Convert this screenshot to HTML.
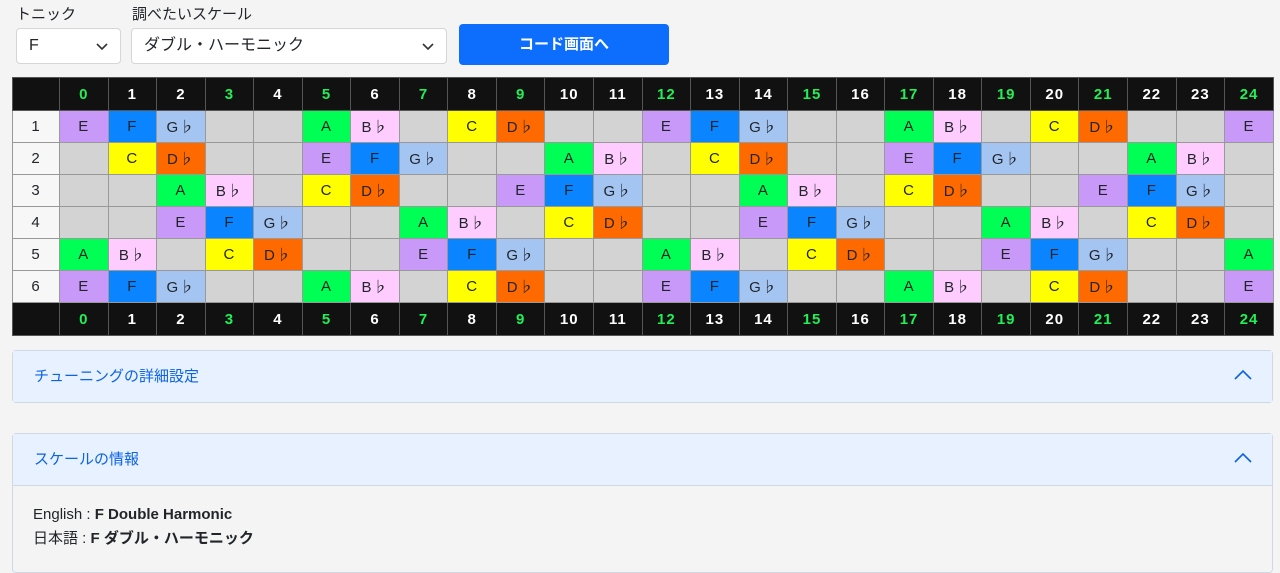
<!DOCTYPE html>
<html><head><meta charset="utf-8"><style>
body{margin:0;background:#f4f4f4;font-family:"Liberation Sans","Noto Sans CJK JP",sans-serif;color:#212529;width:1280px;height:553px;overflow:hidden;position:relative}
.lbl{position:absolute;top:3px;font-size:15px}
.sel{position:absolute;top:28px;height:36px;box-sizing:border-box;background:#fff;border:1px solid #d6d6d6;border-radius:4px;font-size:16px;line-height:34px;padding-left:12px}
.sel svg{position:absolute;right:12px;top:14px}
.btn{position:absolute;left:459px;top:24px;width:210px;height:41px;background:#0d6efd;border-radius:4px;color:#fff;font-size:15px;text-align:center;line-height:41px;font-weight:bold}
table{position:absolute;left:12px;top:77px;border-collapse:collapse;table-layout:fixed;width:1262px}
td{border:1px solid #999;height:31px;padding:0;text-align:center;font-size:15px;background:#d3d3d3;letter-spacing:1px}
tr.h td{background:#111;color:#fff;font-weight:bold;height:32px;border-color:#555}
tr.h td.g{color:#22ee55}
td.n{background:#f7f7f7;width:46px}
tr.h td.n{background:#111}
.e{background:#c999f9}.f{background:#0a84ff}.g{background:#a4c4f2}.a{background:#00ff55}.b{background:#ffccff}.c{background:#ffff00}.d{background:#ff6a00}
.acc{position:absolute;left:12px;width:1261px;border:1px solid #cfd9e6;border-radius:4px;box-sizing:border-box}
.acc .hd{background:#e7f1ff;height:51px;line-height:51px;padding-left:21px;color:#0c63e4;font-size:15px;position:relative}
.acc .hd svg{position:absolute;right:20px;top:19px}
</style></head><body>
<div class="lbl" style="left:16px">トニック</div>
<div class="lbl" style="left:132px">調べたいスケール</div>
<div class="sel" style="left:16px;width:105px">F<svg width="12" height="8"><path d="M1 1l5 5 5-5" stroke="#333" stroke-width="1.6" fill="none"/></svg></div>
<div class="sel" style="left:131px;width:316px">ダブル・ハーモニック<svg width="12" height="8"><path d="M1 1l5 5 5-5" stroke="#333" stroke-width="1.6" fill="none"/></svg></div>
<div class="btn">コード画面へ</div>
<table>
<tr class="h"><td class="n"></td><td class="g">0</td><td>1</td><td>2</td><td class="g">3</td><td>4</td><td class="g">5</td><td>6</td><td class="g">7</td><td>8</td><td class="g">9</td><td>10</td><td>11</td><td class="g">12</td><td>13</td><td>14</td><td class="g">15</td><td>16</td><td class="g">17</td><td>18</td><td class="g">19</td><td>20</td><td class="g">21</td><td>22</td><td>23</td><td class="g">24</td></tr>
<tr><td class="n">1</td><td class="e">E</td><td class="f">F</td><td class="g">G♭</td><td></td><td></td><td class="a">A</td><td class="b">B♭</td><td></td><td class="c">C</td><td class="d">D♭</td><td></td><td></td><td class="e">E</td><td class="f">F</td><td class="g">G♭</td><td></td><td></td><td class="a">A</td><td class="b">B♭</td><td></td><td class="c">C</td><td class="d">D♭</td><td></td><td></td><td class="e">E</td></tr>
<tr><td class="n">2</td><td></td><td class="c">C</td><td class="d">D♭</td><td></td><td></td><td class="e">E</td><td class="f">F</td><td class="g">G♭</td><td></td><td></td><td class="a">A</td><td class="b">B♭</td><td></td><td class="c">C</td><td class="d">D♭</td><td></td><td></td><td class="e">E</td><td class="f">F</td><td class="g">G♭</td><td></td><td></td><td class="a">A</td><td class="b">B♭</td><td></td></tr>
<tr><td class="n">3</td><td></td><td></td><td class="a">A</td><td class="b">B♭</td><td></td><td class="c">C</td><td class="d">D♭</td><td></td><td></td><td class="e">E</td><td class="f">F</td><td class="g">G♭</td><td></td><td></td><td class="a">A</td><td class="b">B♭</td><td></td><td class="c">C</td><td class="d">D♭</td><td></td><td></td><td class="e">E</td><td class="f">F</td><td class="g">G♭</td><td></td></tr>
<tr><td class="n">4</td><td></td><td></td><td class="e">E</td><td class="f">F</td><td class="g">G♭</td><td></td><td></td><td class="a">A</td><td class="b">B♭</td><td></td><td class="c">C</td><td class="d">D♭</td><td></td><td></td><td class="e">E</td><td class="f">F</td><td class="g">G♭</td><td></td><td></td><td class="a">A</td><td class="b">B♭</td><td></td><td class="c">C</td><td class="d">D♭</td><td></td></tr>
<tr><td class="n">5</td><td class="a">A</td><td class="b">B♭</td><td></td><td class="c">C</td><td class="d">D♭</td><td></td><td></td><td class="e">E</td><td class="f">F</td><td class="g">G♭</td><td></td><td></td><td class="a">A</td><td class="b">B♭</td><td></td><td class="c">C</td><td class="d">D♭</td><td></td><td></td><td class="e">E</td><td class="f">F</td><td class="g">G♭</td><td></td><td></td><td class="a">A</td></tr>
<tr><td class="n">6</td><td class="e">E</td><td class="f">F</td><td class="g">G♭</td><td></td><td></td><td class="a">A</td><td class="b">B♭</td><td></td><td class="c">C</td><td class="d">D♭</td><td></td><td></td><td class="e">E</td><td class="f">F</td><td class="g">G♭</td><td></td><td></td><td class="a">A</td><td class="b">B♭</td><td></td><td class="c">C</td><td class="d">D♭</td><td></td><td></td><td class="e">E</td></tr>
<tr class="h"><td class="n"></td><td class="g">0</td><td>1</td><td>2</td><td class="g">3</td><td>4</td><td class="g">5</td><td>6</td><td class="g">7</td><td>8</td><td class="g">9</td><td>10</td><td>11</td><td class="g">12</td><td>13</td><td>14</td><td class="g">15</td><td>16</td><td class="g">17</td><td>18</td><td class="g">19</td><td>20</td><td class="g">21</td><td>22</td><td>23</td><td class="g">24</td></tr>
</table>
<div class="acc" style="top:350px"><div class="hd">チューニングの詳細設定<svg width="18" height="10"><path d="M1 9l8-8 8 8" stroke="#0c63e4" stroke-width="1.6" fill="none"/></svg></div></div>
<div class="acc" style="top:433px;height:140px"><div class="hd" style="border-bottom:1px solid #cfd9e6">スケールの情報<svg width="18" height="10"><path d="M1 9l8-8 8 8" stroke="#0c63e4" stroke-width="1.6" fill="none"/></svg></div>
<div style="padding:17px 0 0 20px;font-size:15px;line-height:24px">English : <b>F Double Harmonic</b><br>日本語 : <b>F ダブル・ハーモニック</b></div></div>
</body></html>
